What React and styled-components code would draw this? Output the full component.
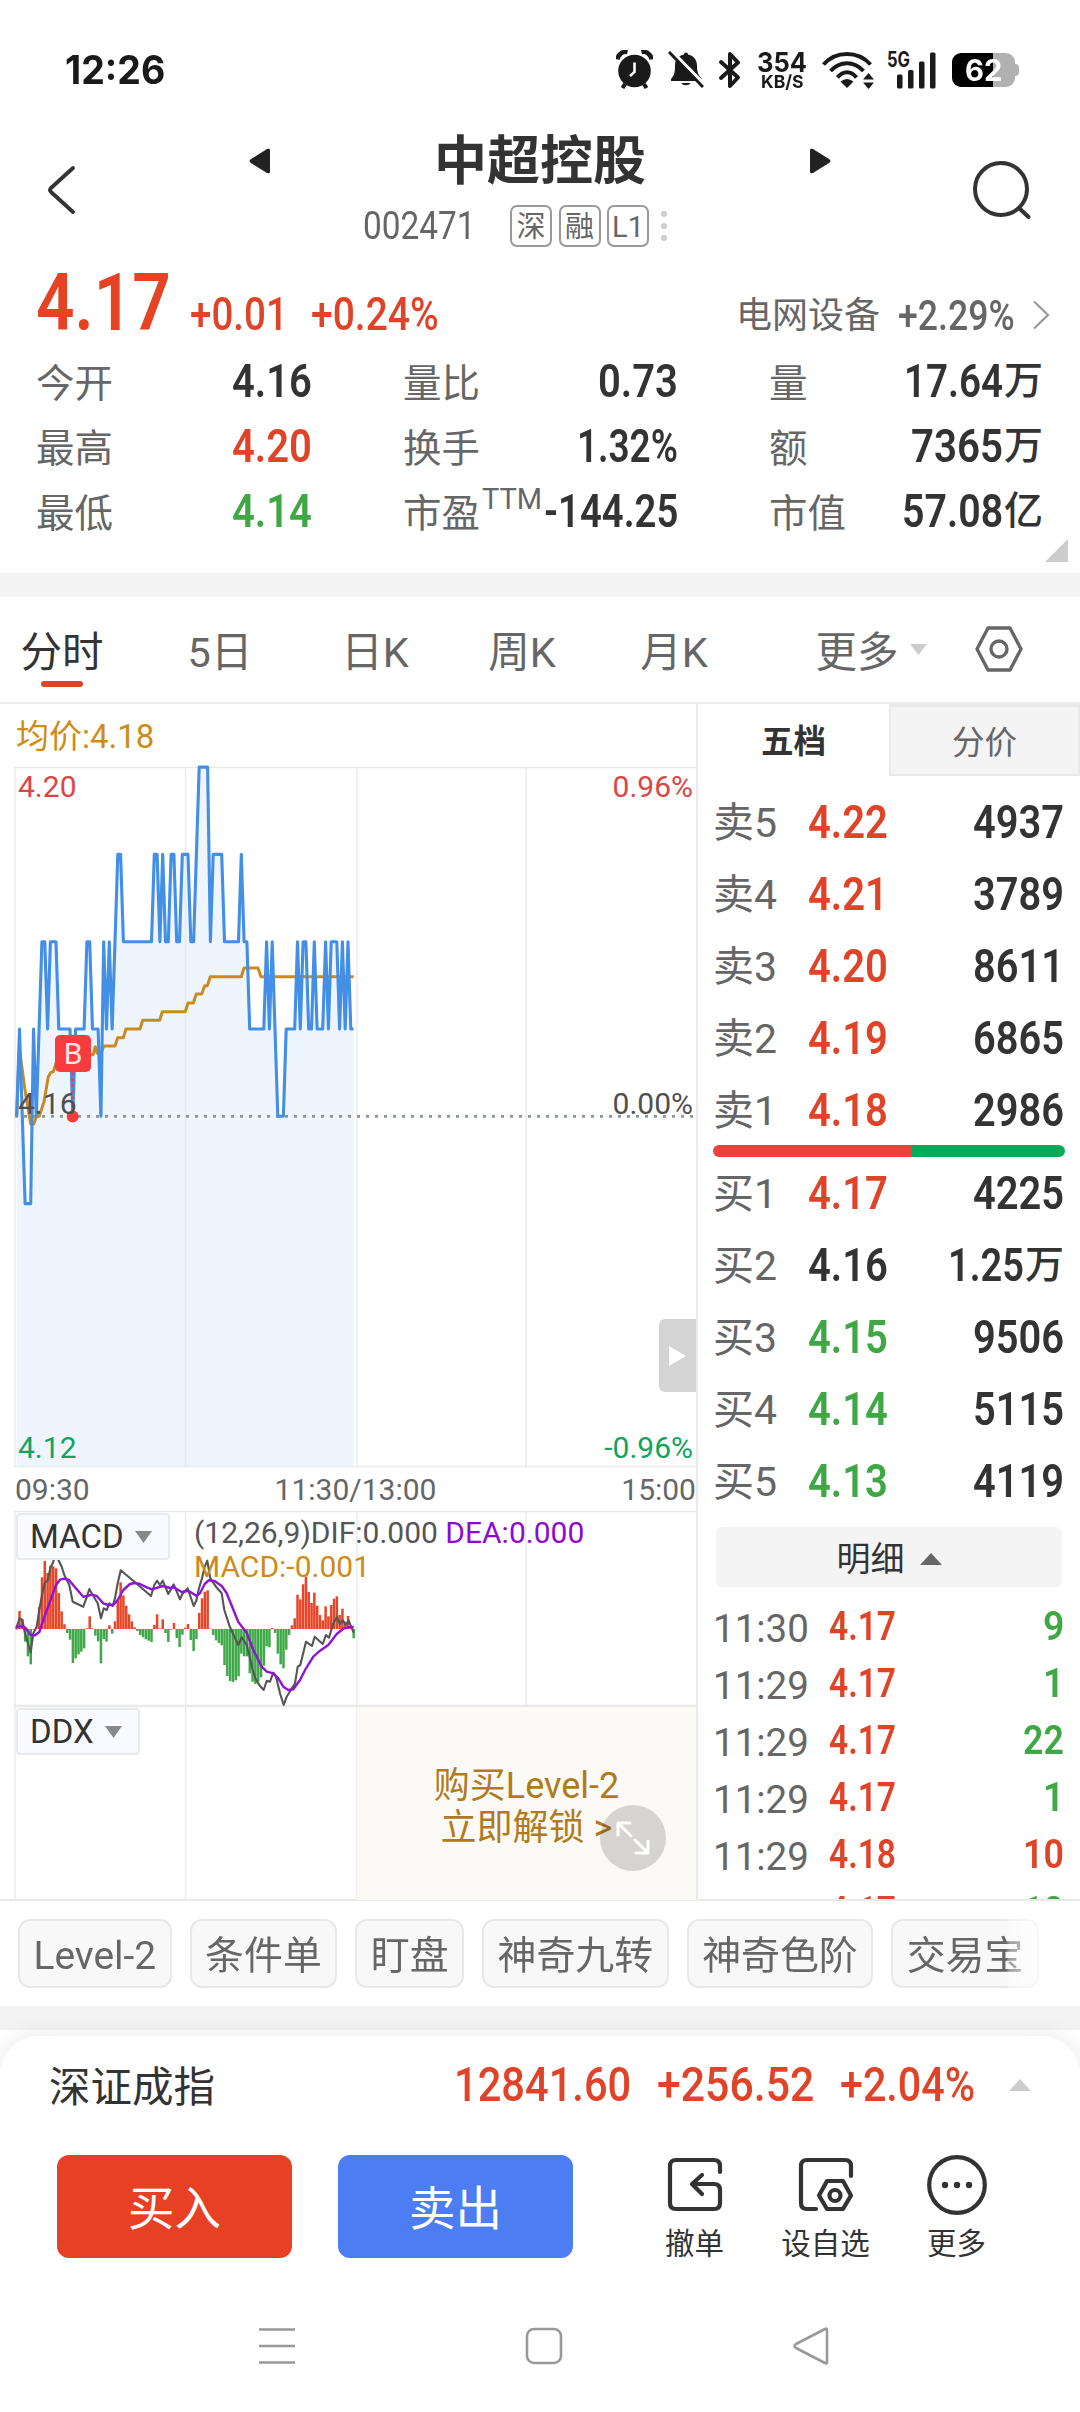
import React, { useLayoutEffect, useRef, useState } from "react";
import styled, { createGlobalStyle, css } from "styled-components";

const RED = "#e04428";
const GREEN = "#3fa845";
const INK = "#333333";
const GREY = "#666666";
const LINE = "#e9e9e9";
const GOLD = "#cf8b17";

const GlobalStyle = createGlobalStyle`
  * { box-sizing: border-box; }
  html, body { margin: 0; padding: 0; background: #fff; }
  body {
    width: 1080px;
    height: 2412px;
    overflow: hidden;
    font-family: Roboto, "Noto Sans CJK SC", sans-serif;
    color: ${INK};
  }
  svg { display: block; flex: none; }
`;

/* ---------- condensed figures ---------- */

const FitBox = styled.span`
  display: inline-block;
  flex: none;
  width: ${(p) => p.$w}px;
  white-space: nowrap;
  font-size: ${(p) => p.$size}px;
  font-weight: ${(p) => p.$weight};
  line-height: 1;
  color: ${(p) => p.$color};
`;

const FitInner = styled.span`
  display: inline-block;
  transform-origin: 0 50%;
`;

function Fit({ w, size = 46, weight = 600, color = INK, children }) {
  const ref = useRef(null);
  const [k, setK] = useState(1);
  useLayoutEffect(() => {
    setK(w / ref.current.offsetWidth);
  }, [w, children]);
  return (
    <FitBox $w={w} $size={size} $weight={weight} $color={color}>
      <FitInner ref={ref} style={{ transform: `scaleX(${k})` }}>{children}</FitInner>
    </FitBox>
  );
}

/* ---------- status bar ---------- */

const StatusBar = styled.div`
  display: flex;
  align-items: center;
  height: 112px;
  padding: 27px 62px 0 65px;
  justify-content: space-between;
  font-family: Inter, Roboto, sans-serif;
  color: #1a1a1a;
`;
const StatusIcons = styled.div`
  display: flex;
  align-items: center;
  height: 40px;
`;
const Gap = styled.i`
  flex: none;
  width: ${(p) => p.$w}px;
`;
const NetSpeed = styled.div`
  display: flex;
  flex-direction: column;
  align-items: center;
  width: 50px;
  gap: 0;
  > :first-child { margin-bottom: -3px; }
`;
const Battery = styled.div`
  position: relative;
  width: 63px;
  height: 34px;
  border-radius: 9px;
  background: linear-gradient(90deg, #000 41px, #b1b1b1 41px);
  display: flex;
  align-items: center;
  justify-content: center;
  &::after {
    content: "";
    position: absolute;
    right: -4px;
    top: 11px;
    width: 4px;
    height: 12px;
    border-radius: 0 4px 4px 0;
    background: #b1b1b1;
  }
`;

function Status() {
  return (
    <StatusBar>
      <Fit w={100} size={39} weight={650} color="#1a1a1a">12:26</Fit>
      <StatusIcons>
        <svg width="37" height="39" viewBox="0 0 37 39">
          <circle cx="18.5" cy="21" r="16.3" fill="#1a1a1a" />
          <path d="M1.500 9.500C2 4 7 1 11.500 2M35.500 9.500C35 4 30 1 25.500 2" stroke="#1a1a1a" strokeWidth="4.500" fill="none" />
          <path d="M9 34l-2.500 4M28 34l2.500 4" stroke="#1a1a1a" strokeWidth="4" />
          <path d="M18.500 12.500v9.500l-4.500 4" stroke="#fff" strokeWidth="2.600" fill="none" />
        </svg>
        <Gap $w={15} />
        <svg width="36" height="37" viewBox="0 0 36 37">
          <path d="M18 1.500c1.500 0 2 1 2 2 5 1 9 4.500 9 11 0 8 2 10 5 13.500v2H3v-2C6 24.500 7 22.500 7 14.500c0-6.500 4-10 9-11 0-1 .5-2 2-2z" fill="#1a1a1a" />
          <path d="M13.500 32h9c-1 3-8 3-9 0z" fill="#1a1a1a" />
          <path d="M3.500 0L37 34" stroke="#fff" strokeWidth="3.500" />
          <path d="M1 1l34 35" stroke="#1a1a1a" strokeWidth="3" />
        </svg>
        <Gap $w={14} />
        <svg width="25" height="38" viewBox="0 0 25 38">
          <path d="M3 11l17 15.500-8 8.500V3l8 8.500L3 27" stroke="#1a1a1a" strokeWidth="4" fill="none" strokeLinejoin="round" strokeLinecap="round" />
        </svg>
        <Gap $w={14} />
        <NetSpeed>
          <Fit w={50} size={27} weight={700} color="#1a1a1a">354</Fit>
          <Fit w={43} size={18} weight={700} color="#1a1a1a">KB/S</Fit>
        </NetSpeed>
        <Gap $w={15} />
        <svg width="52" height="38" viewBox="0 0 52 38">
          <g stroke="#1a1a1a" strokeWidth="4" fill="none">
            <path d="M1.500 13.500C14-.5 36-.5 48.500 13.500" />
            <path d="M8.500 20C18 9.500 32 9.500 41.500 20" />
            <path d="M15.500 26.500C21 19.500 29 19.500 34.500 26.500" />
          </g>
          <path d="M25 37l-6.500-6.500q6.500-5 13 0z" fill="#1a1a1a" />
          <path d="M41 28.500h11L46.500 22zM41 31.500h11L46.500 38z" fill="#1a1a1a" />
        </svg>
        <Gap $w={13} />
        <svg width="50" height="38" viewBox="0 0 50 38" overflow="visible">
          <text x="0" y="16" fontFamily="Inter, Roboto, sans-serif" fontSize="21" fontWeight="700" fill="#1a1a1a" textLength="23" lengthAdjust="spacingAndGlyphs">5G</text>
          <g fill="#1a1a1a">
            <rect x="10" y="23.500" width="5.500" height="14" rx="1.500" />
            <rect x="21" y="19" width="5.500" height="18.500" rx="1.500" />
            <rect x="32" y="10.500" width="5.500" height="27" rx="1.500" />
            <rect x="43" y="1.500" width="5.500" height="36" rx="1.500" />
          </g>
        </svg>
        <Gap $w={15} />
        <Battery>
          <Fit w={37} size={30} weight={700} color="#fff">62</Fit>
        </Battery>
        <Gap $w={3} />
      </StatusIcons>
    </StatusBar>
  );
}

/* ---------- title ---------- */

const Header = styled.header`
  display: grid;
  grid-template-columns: 249px 1fr 249px;
  height: 150px;
`;
const HeadSide = styled.div`
  display: flex;
  padding: ${(p) => p.$pad};
`;
const HeadCenter = styled.div`
  display: flex;
  flex-direction: column;
`;
const TitleRow = styled.div`
  display: flex;
  align-items: center;
  justify-content: space-between;
  height: 98px;
  h1 {
    margin: 0;
    padding-top: 2px;
    font-size: 53px;
    line-height: 60px;
    font-weight: 700;
  }
`;
const CodeRow = styled.div`
  display: flex;
  align-items: center;
  height: 42px;
  margin-top: -5px;
  padding-left: 114px;
`;
const Badge = styled.span`
  display: flex;
  align-items: center;
  justify-content: center;
  width: 42px;
  height: 42px;
  margin-right: 6.5px;
  border: 2px solid #999;
  border-radius: 7px;
  padding-top: 1px;
  font-size: 29px;
  line-height: 38px;
  color: ${GREY};
`;
const Dots = styled.span`
  display: grid;
  gap: 6px;
  margin-left: 5px;
  i { width: 6px; height: 6px; border-radius: 3px; background: #ccc; }
`;

/* ---------- quote ---------- */

const Quote = styled.section`
  height: 311px;
  padding: 0 12px 0 36px;
`;
const PriceRow = styled.div`
  display: flex;
  align-items: baseline;
  height: 86px;
  padding-top: 2px;
`;
const Spacer = styled.i`
  flex: 1;
`;
const Sector = styled.span`
  font-size: 36px;
  line-height: 1;
  color: ${GREY};
  margin-right: 18px;
  position: relative;
  top: -2px;
`;
const Stats = styled.div`
  display: grid;
  grid-template-columns: 276px 275px 274px;
  grid-auto-rows: 65px;
  column-gap: 91px;
`;
const Stat = styled.div`
  display: flex;
  align-items: center;
  justify-content: space-between;
`;
const StatLabel = styled.span`
  position: relative;
  top: 3px;
  font-size: 38.5px;
  line-height: 50px;
  color: ${GREY};
  white-space: nowrap;
`;
const Sup = styled.sup`
  position: absolute;
  left: 100%;
  top: -15px;
  margin-left: 2px;
  font-size: 29px;
  line-height: 50px;
`;
const StatValue = styled.span`
  display: flex;
  align-items: center;
  gap: 1px;
`;
const Unit = styled.span`
  font-size: ${(p) => p.$size || 39}px;
  line-height: 50px;
  font-weight: 500;
`;
const CornerRow = styled.div`
  display: flex;
  justify-content: flex-end;
  margin-top: -4px;
`;

const STATS = [
  ["今开", "4.16", 80, INK], ["量比", "0.73", 80, INK], ["量", "17.64", 99, INK, "万"],
  ["最高", "4.20", 80, RED], ["换手", "1.32%", 101, INK], ["额", "7365", 92, INK, "万"],
  ["最低", "4.14", 80, GREEN], ["市盈", "-144.25", 134, INK], ["市值", "57.08", 101, INK, "亿"],
];

const Band = styled.div`
  height: 24px;
  background: #f4f4f4;
`;

/* ---------- period tabs ---------- */

const Tabs = styled.nav`
  display: flex;
  height: 107px;
  padding-left: 21px;
  border-bottom: 2px solid ${LINE};
`;
const Tab = styled.span`
  display: flex;
  flex-direction: column;
  align-items: center;
  width: ${(p) => p.$w}px;
  margin-right: ${(p) => p.$gap}px;
  padding-top: 28px;
  font-size: 41.5px;
  line-height: 56px;
  white-space: nowrap;
  color: ${(p) => (p.$on ? INK : GREY)};
  ${(p) => p.$on && css`
    &::after {
      content: "";
      width: 42px;
      height: 6px;
      border-radius: 3px;
      background: ${RED};
    }
  `}
`;
const TabIcon = styled.span`
  padding-top: ${(p) => p.$top}px;
  margin-right: ${(p) => p.$gap || 0}px;
`;

/* ---------- body ---------- */

const Body = styled.main`
  display: grid;
  grid-template-columns: 696px 384px;
  height: 1197px;
  border-bottom: 2px solid ${LINE};
`;
const ChartCol = styled.div`
  display: flex;
  flex-direction: column;
  padding-left: 14px;
`;
const Average = styled.div`
  height: 64px;
  padding: 8px 0 0 2px;
  font-size: 33px;
  line-height: 50px;
  color: ${GOLD};
`;
const Panel = styled.div`
  position: relative;
  display: flex;
  flex-direction: column;
  height: ${(p) => p.$h}px;
  > svg { position: absolute; left: 0; top: 0; }
`;
const ScaleRow = styled.div`
  position: relative;
  display: flex;
  justify-content: space-between;
  padding: 0 3px 0 4px;
  margin-top: ${(p) => p.$top}px;
  font-size: 30px;
  line-height: 36px;
  color: ${(p) => p.$color};
`;
const AxisRow = styled.div`
  display: flex;
  justify-content: space-between;
  height: 44px;
  padding-left: 1px;
  font-size: 30px;
  line-height: 46px;
  color: #666;
`;
const BuyMark = styled.span`
  position: absolute;
  left: 41px;
  top: 267px;
  width: 36px;
  height: 37px;
  border-radius: 5px;
  background: #f73c40;
  color: #fde3e3;
  font-size: 30px;
  line-height: 38px;
  text-align: center;
`;
const Handle = styled.span`
  position: absolute;
  right: 0;
  top: 551px;
  width: 37px;
  height: 73px;
  border-radius: 6px 0 0 6px;
  background: #d4d4d4;
  display: flex;
  align-items: center;
  justify-content: center;
`;
const IndicatorRow = styled.div`
  position: relative;
  display: flex;
  padding: 2px 0 0 2px;
`;
const Picker = styled.span`
  display: flex;
  align-items: center;
  gap: 11px;
  width: ${(p) => p.$w}px;
  height: 47px;
  padding-left: 12px;
  border: 2px solid #e8e9ec;
  border-radius: 4px;
  background: #f9faff;
  font-size: 33px;
  line-height: 44px;
  color: ${INK};
`;
const Legend = styled.div`
  padding-left: 24px;
  font-size: 30px;
  line-height: 34px;
  color: #555;
  white-space: nowrap;
  padding-top: 3px;
  b { font-weight: 400; color: #8f0ad1; }
  em { display: block; font-style: normal; color: ${GOLD}; }
`;
const Unlock = styled.div`
  position: absolute;
  left: 343px;
  top: 1px;
  width: 339px;
  height: 193px;
  padding-top: 58px;
  background: #fbfaf6;
  color: #b17b1d;
  font-size: 36px;
  line-height: 42px;
  text-align: center;
`;
const FullScreen = styled.span`
  position: absolute;
  left: 243px;
  top: 98px;
  width: 66px;
  height: 66px;
  border-radius: 33px;
  background: rgba(0, 0, 0, 0.15);
  display: flex;
  align-items: center;
  justify-content: center;
`;

const X = (i) => 16.67 + 2.808 * i;
const Y = (p) => 1116.3 - (p - 16) * 87.3;

/* last digits of the price for every minute of the morning, as [price, minutes] */
const RUNS = [
  [16, 1], [17, 1], [16, 1], [15, 3], [17, 1], [16, 1], [17, 1], [18, 2], [17, 1], [18, 3], [17, 5], [16, 1],
  [17, 4], [18, 2], [17, 3], [16, 1], [18, 1], [17, 1], [18, 1], [17, 1], [18, 1], [19, 2], [18, 11], [19, 2],
  [18, 1], [19, 1], [18, 2], [19, 2], [18, 2], [19, 3], [18, 2], [19, 1], [20, 4], [18, 1], [19, 4], [18, 6],
  [19, 1], [18, 2], [17, 6], [18, 1], [17, 1], [18, 1], [17, 1], [16, 3], [17, 4], [18, 1], [17, 1], [18, 2],
  [17, 2], [18, 1], [17, 3], [18, 1], [17, 1], [18, 3], [17, 1], [18, 1], [17, 1], [18, 1], [17, 2],
];
const PRICES = RUNS.flatMap(([p, n]) => Array(n).fill(p));
const PRICE_LINE = PRICES.map((p, i) => `${X(i).toFixed(1)},${Y(p).toFixed(1)}`).join(" ");

const scaled = (s, oy) =>
  s.trim().split(/\s+/).map((q) => {
    const [x, y] = q.split(",").map(Number);
    return `${(x / 3).toFixed(1)},${(oy + y / 3).toFixed(1)}`;
  }).join(" ");

const AVG_LINE = scaled(
  "50,1129 58,925 75,1050 92,1152 101,1152 109,1130 118,1128 132,1085 145,1010 152,998 160,995 168,970 200,960 272,945 280,943 286,920 292,940 303,940 311,918 345,918 353,893 370,893 378,867 420,867 428,841 479,841 487,815 556,815 564,789 580,789 589,762 605,762 614,737 622,737 631,710 724,710 732,684 774,684 783,710 1061,710",
  740
);

const BARS = [
  0, 54, 30, -38, -82, -106, -2, 5, 66, 155, 204, 168, 190, 188, 182, 108, 53, 14, -12, -32, -102, -88, -76, -68, -58,
  2, 38, 2, -20, -37, -103, -30, -38, 11, -14, 23, 85, 140, 101, 70, 44, 23, 5, -6, -18, -25, -31, -35, -39, 12, 44, 2,
  29, -12, -39, -2, 18, -27, -54, -17, 4, 15, -33, -66, -30, 48, 92, 112, 116, 1, -18, -34, -42, -49, -108, -141, -156,
  -159, -154, -142, -74, -82, -82, -133, -158, -165, -158, -145, -110, -52, -55, 3, -12, -74, -106, -118, -62, -18, 11,
  32, 103, 89, 134, 157, 111, 78, 109, 70, 42, 26, 68, 38, 72, 91, 98, 42, 61, 22, 39, 10, -28,
];

const DIF_LINE = scaled(
  "48,356 59,325 67,330 75,370 92,428 100,370 110,350 118,300 126,255 134,218 143,212 151,175 160,155 165,140 171,142 185,170 193,195 208,225 218,275 250,290 260,262 268,237 275,250 293,280 303,325 311,295 320,300 328,280 338,288 345,265 353,220 362,181 404,216 453,258 463,225 471,212 480,225 488,212 505,252 521,223 540,268 547,252 563,235 581,288 589,272 597,235 606,205 614,170 622,152 631,205 648,230 665,250 673,300 690,352 715,405 725,382 740,405 749,440 758,480 766,505 780,528 791,540 800,512 810,515 820,488 828,500 840,550 851,585 860,560 885,520 893,470 901,465 918,395 936,408 944,380 968,402 978,375 987,383 1000,340 1011,322 1020,342 1028,330 1037,345 1046,332 1061,368",
  1510
);
const DEA_LINE = scaled(
  "48,354 60,348 75,352 92,375 105,376 118,366 134,318 151,272 168,225 180,209 193,206 207,210 225,232 250,260 262,258 275,254 290,258 310,280 325,285 340,285 353,270 370,240 390,222 404,219 420,222 440,232 456,238 488,228 510,234 521,232 545,246 565,242 589,257 600,250 614,222 626,211 645,214 665,228 680,250 715,336 740,368 760,420 785,470 800,485 820,490 835,505 850,530 865,540 880,538 900,510 918,475 940,440 960,422 985,405 1010,372 1030,356 1050,351 1061,352",
  1510
);

function Frame({ top, height }) {
  return (
    <g stroke={LINE} strokeWidth="1.3">
      <path d={`M14 ${top + 0.5}H697M14 ${top + height - 0.5}H697`} />
      <path d={`M15 ${top}v${height}M185.500 ${top}v${height}M357 ${top}v${height}M526 ${top}v${height}`} />
    </g>
  );
}

function PriceChart() {
  return (
    <svg width="683" height="699" viewBox="14 768 683 699" overflow="visible">
      <polygon points={`${X(0)},1466 ${PRICE_LINE} ${X(120)},1466`} fill="#eef5fe" />
      <Frame top={767} height={700} />
      <path d="M15 1116.300H697" stroke="#8f959c" strokeWidth="2.800" strokeDasharray="3 6" />
      <polyline points={AVG_LINE} fill="none" stroke="#c98a1e" strokeWidth="3" strokeLinejoin="round" />
      <polyline points={PRICE_LINE} fill="none" stroke="#438fe6" strokeWidth="3.100" strokeLinejoin="round" />
      <path d="M72.700 1072V1112" stroke="#f73c40" strokeWidth="2.600" strokeDasharray="3 3" />
      <circle cx="72.700" cy="1116.500" r="6" fill="#f73c40" />
    </svg>
  );
}

function MacdChart() {
  return (
    <svg width="683" height="195" viewBox="14 1511 683 195" overflow="visible">
      <Frame top={1511} height={195} />
      {BARS.map((v, i) => (
        <rect
          key={i}
          x={X(i) - 1.2}
          y={v > 0 ? 1629 - v / 3 : 1629}
          width="2.500"
          height={Math.max(Math.abs(v) / 3, 0.5)}
          fill={v > 0 ? "#e84427" : "#3ea947"}
        />
      ))}
      <polyline points={DIF_LINE} fill="none" stroke="#555" strokeWidth="2.100" strokeLinejoin="round" />
      <polyline points={DEA_LINE} fill="none" stroke="#8f14d6" strokeWidth="2.400" strokeLinejoin="round" />
    </svg>
  );
}

/* ---------- order book ---------- */

const Book = styled.aside`
  display: flex;
  flex-direction: column;
  height: 1195px;
  overflow: hidden;
  border-left: 2px solid ${LINE};
`;
const BookTabs = styled.div`
  display: grid;
  flex: none;
  grid-template-columns: 191px 191px;
  height: 72px;
  margin-bottom: 10px;
`;
const BookTab = styled.span`
  display: flex;
  align-items: center;
  justify-content: center;
  padding-top: 4px;
  font-size: 32.5px;
  line-height: 40px;
  font-weight: ${(p) => (p.$on ? 700 : 400)};
  color: ${(p) => (p.$on ? INK : GREY)};
  ${(p) => !p.$on && css`
    background: #f4f4f4;
    border: 2px solid ${LINE};
    border-top-width: 3px;
  `}
`;
const Level = styled.div`
  display: grid;
  flex: none;
  grid-template-columns: 95px 1fr auto;
  align-items: center;
  height: 72px;
  padding: 0 16px 0 15px;
`;
const LevelName = styled.span`
  position: relative;
  top: 1px;
  font-size: 41px;
  line-height: 50px;
  color: ${GREY};
`;
const Ratio = styled.div`
  flex: none;
  height: 12px;
  margin: -1px 15px 0 15px;
  border-radius: 6px;
  background: linear-gradient(90deg, #f43d3f 199px, #09a85a 199px);
`;
const DetailButton = styled.div`
  display: flex;
  flex: none;
  align-items: center;
  justify-content: center;
  gap: 15px;
  height: 60px;
  margin: 10px 18px 11px 18px;
  border-radius: 6px;
  background: #f4f4f4;
  padding-top: 4px;
  font-size: 34px;
  line-height: 50px;
  color: ${INK};
`;
const Trade = styled.div`
  display: grid;
  flex: none;
  grid-template-columns: 116px 1fr auto;
  align-items: center;
  height: 57px;
  padding: 0 16px 0 15px;
`;
const TradeTime = styled.span`
  position: relative;
  top: 2px;
  font-size: 38.5px;
  line-height: 50px;
  color: ${GREY};
`;

const SELLS = [["卖5", "4.22", "4937"], ["卖4", "4.21", "3789"], ["卖3", "4.20", "8611"], ["卖2", "4.19", "6865"], ["卖1", "4.18", "2986"]];
const BUYS = [["买1", "4.17", "4225", RED], ["买2", "4.16", "1.25", INK, "万"], ["买3", "4.15", "9506", GREEN], ["买4", "4.14", "5115", GREEN], ["买5", "4.13", "4119", GREEN]];
const TRADES = [
  ["11:30", "4.17", "9", 21, GREEN], ["11:29", "4.17", "1", 21, GREEN], ["11:29", "4.17", "22", 41, GREEN],
  ["11:29", "4.17", "1", 21, GREEN], ["11:29", "4.18", "10", 41, RED], ["11:29", "4.17", "12", 41, GREEN],
];

function BookRow({ name, price, qty, color, unit }) {
  return (
    <Level>
      <LevelName>{name}</LevelName>
      <Fit w={80} color={color}>{price}</Fit>
      <StatValue>
        <Fit w={unit ? 76 : 91}>{qty}</Fit>
        {unit && <Unit>{unit}</Unit>}
      </StatValue>
    </Level>
  );
}

/* ---------- shortcuts ---------- */

const Pills = styled.div`
  display: flex;
  gap: 18px;
  width: 1062px;
  height: 105px;
  padding: 18px 0 0 18px;
  overflow: hidden;
  mask-image: linear-gradient(90deg, #000 1006px, rgba(0, 0, 0, 0.65) 1009px, transparent 1062px);
`;
const Pill = styled.span`
  flex: none;
  height: 69px;
  padding: 1px 13.5px 0;
  border: 2px solid #e8e8e8;
  border-radius: 12px;
  background: #f8f8f8;
  font-size: 38.9px;
  line-height: 67px;
  color: ${GREY};
  white-space: nowrap;
`;
const LowBand = styled.div`
  height: 24px;
  background: #f3f3f3;
`;

/* ---------- bottom sheet ---------- */

const Sheet = styled.footer`
  position: relative;
  height: 376px;
  margin-top: 6px;
  border-radius: 38px 38px 0 0;
  background: #fff;
  box-shadow: 0 0 26px rgba(0, 0, 0, 0.09);
`;
const IndexRow = styled.div`
  display: flex;
  align-items: center;
  height: 97px;
  padding: 0 49px 0 49px;
`;
const IndexName = styled.span`
  flex: 1;
  position: relative;
  top: 3px;
  font-size: 41.5px;
  line-height: 56px;
`;
const Actions = styled.div`
  display: flex;
  height: 125px;
  padding: 22px 0 0 57px;
`;
const TradeButton = styled.button`
  width: 235px;
  height: 103px;
  margin: 0 46px 0 0;
  padding: 5px 0 0;
  border: 0;
  border-radius: 12px;
  background: ${(p) => p.$bg};
  color: #fff;
  font: 400 46.5px/98px Roboto, "Noto Sans CJK SC", sans-serif;
`;
const Tool = styled.span`
  display: flex;
  flex-direction: column;
  align-items: center;
  width: 131px;
  margin-left: ${(p) => p.$ml || 0}px;
  font-size: 29.5px;
  line-height: 36px;
  svg { margin: -1px 0 10px; }
`;
const NavBar = styled.div`
  display: flex;
  height: 150px;
  padding: 68px 249px 0 257px;
  justify-content: space-between;
`;

const Caret = ({ w, h, color, up }) => (
  <svg width={w} height={h} viewBox="0 0 10 10" preserveAspectRatio="none">
    <path d={up ? "M0 10h10L5 0z" : "M0 0h10L5 10z"} fill={color} />
  </svg>
);

export default function App() {
  return (
    <>
      <GlobalStyle />
      <Status />
      <Header>
        <HeadSide $pad="54px 0 0 47px">
          <svg width="29" height="48" viewBox="0 0 29 48"><path d="M26 2L4 22q-2 2 0 4l22 20" fill="none" stroke="#333" strokeWidth="3.800" strokeLinecap="round" /></svg>
        </HeadSide>
        <HeadCenter>
          <TitleRow>
            <svg width="21" height="26" viewBox="0 0 21 26"><path d="M21 2v22q0 2-3 1L2 15q-3-2 0-4L18 1q3-1 3 1z" fill="#222" /></svg>
            <h1>中超控股</h1>
            <svg width="21" height="26" viewBox="0 0 21 26"><path d="M0 2v22q0 2 3 1l16-10q3-2 0-4L3 1Q0 0 0 2z" fill="#222" /></svg>
          </TitleRow>
          <CodeRow>
            <Fit w={113} size={39} weight={400} color={GREY}>002471</Fit>
            <Gap $w={34} />
            <Badge>深</Badge>
            <Badge>融</Badge>
            <Badge>L1</Badge>
            <Dots><i /><i /><i /></Dots>
          </CodeRow>
        </HeadCenter>
        <HeadSide $pad="47px 0 0 140px">
          <svg width="62" height="62" viewBox="0 0 62 62" fill="none" stroke="#333" strokeWidth="4"><circle cx="30" cy="30" r="26" /><path d="M48 49l9.500 9" strokeLinecap="round" /></svg>
        </HeadSide>
      </Header>
      <Quote>
        <PriceRow>
          <Fit w={135} size={79} weight={600} color="#e64325">4.17</Fit>
          <Gap $w={19} />
          <Fit w={98} size={46} weight={500} color={RED}>+0.01</Fit>
          <Gap $w={23} />
          <Fit w={128} size={46} weight={500} color={RED}>+0.24%</Fit>
          <Spacer />
          <Sector>电网设备</Sector>
          <Fit w={117} size={42} weight={500} color={GREY}>+2.29%</Fit>
          <Gap $w={18} />
          <svg width="17" height="30" viewBox="0 0 17 30"><path d="M1 1.500L15 15 1 28.500" fill="none" stroke="#999" strokeWidth="2.200" /></svg>
          <Gap $w={18} />
        </PriceRow>
        <Stats>
          {STATS.map(([label, value, w, color, unit]) => (
            <Stat key={label}>
              <StatLabel>{label}{label === "市盈" && <Sup>TTM</Sup>}</StatLabel>
              <StatValue>
                <Fit w={w} color={color}>{value}</Fit>
                {unit && <Unit>{unit}</Unit>}
              </StatValue>
            </Stat>
          ))}
        </Stats>
        <CornerRow><svg width="23" height="23" viewBox="0 0 23 23"><path d="M23 0v23H0z" fill="#ccc" /></svg></CornerRow>
      </Quote>
      <Band />
      <Tabs>
        <Tab $w={82} $gap={86} $on>分时</Tab>
        <Tab $w={62} $gap={91}>5日</Tab>
        <Tab $w={66} $gap={81}>日K</Tab>
        <Tab $w={66} $gap={86}>周K</Tab>
        <Tab $w={66} $gap={109}>月K</Tab>
        <Tab $w={82} $gap={12}>更多</Tab>
        <TabIcon $top={47} $gap={48}><Caret w={17} h={11} color="#ccc" /></TabIcon>
        <TabIcon $top={29}>
          <svg width="48" height="46" viewBox="0 0 48 46" fill="none" stroke="#666" strokeWidth="3.400" strokeLinejoin="round"><path d="M13 2h22l11 21-11 21H13L2 23z" /><circle cx="24" cy="23" r="8" /></svg>
        </TabIcon>
      </Tabs>
      <Body>
        <ChartCol>
          <Average>均价:4.18</Average>
          <Panel $h={699}>
            <PriceChart />
            <ScaleRow $top={1} $color="#dd4444"><span>4.20</span><span>0.96%</span></ScaleRow>
            <ScaleRow $top={281} $color="#4f4f4f"><span>4.16</span><span>0.00%</span></ScaleRow>
            <ScaleRow $top={308} $color="#12a35c"><span>4.12</span><span>-0.96%</span></ScaleRow>
            <BuyMark>B</BuyMark>
            <Handle><svg width="17" height="20" viewBox="0 0 17 20"><path d="M0 0l17 10L0 20z" fill="#fff" /></svg></Handle>
          </Panel>
          <AxisRow><span>09:30</span><span>11:30/13:00</span><span>15:00</span></AxisRow>
          <Panel $h={195}>
            <MacdChart />
            <IndicatorRow>
              <Picker $w={154}>MACD<Caret w={17} h={12} color="#888" /></Picker>
              <Legend>(12,26,9)DIF:0.000 <b>DEA:0.000</b><em>MACD:-0.001</em></Legend>
            </IndicatorRow>
          </Panel>
          <Panel $h={194}>
            <svg width="683" height="194" viewBox="14 1706 683 194"><Frame top={1706} height={194} /></svg>
            <IndicatorRow><Picker $w={124}>DDX<Caret w={17} h={12} color="#888" /></Picker></IndicatorRow>
            <Unlock>
              购买Level-2<br />立即解锁 &gt;
              <FullScreen>
                <svg width="34" height="34" viewBox="0 0 34 34" fill="none" stroke="#fff" strokeWidth="3" strokeLinecap="round" strokeLinejoin="round"><path d="M2 14V2h12M2 2l13 13M20 32h12V20M32 32L19 19" /></svg>
              </FullScreen>
            </Unlock>
          </Panel>
        </ChartCol>
        <Book>
          <BookTabs><BookTab $on>五档</BookTab><BookTab>分价</BookTab></BookTabs>
          {SELLS.map(([n, p, q]) => <BookRow key={n} name={n} price={p} qty={q} color={RED} />)}
          <Ratio />
          {BUYS.map(([n, p, q, c, u]) => <BookRow key={n} name={n} price={p} qty={q} color={c} unit={u} />)}
          <DetailButton>明细<Caret w={22} h={12} color="#666" up /></DetailButton>
          {TRADES.map(([t, p, q, w, c], i) => (
            <Trade key={i}>
              <TradeTime>{t}</TradeTime>
              <Fit w={67} size={40} color={RED}>{p}</Fit>
              <Fit w={w} size={41} color={c}>{q}</Fit>
            </Trade>
          ))}
        </Book>
      </Body>
      <Pills>
        <Pill>Level-2</Pill>
        <Pill>条件单</Pill>
        <Pill>盯盘</Pill>
        <Pill>神奇九转</Pill>
        <Pill>神奇色阶</Pill>
        <Pill>交易宝</Pill>
        <Pill />
      </Pills>
      <LowBand />
      <Sheet>
        <IndexRow>
          <IndexName>深证成指</IndexName>
          <Fit w={177} size={48} weight={500} color={RED}>12841.60</Fit>
          <Gap $w={26} />
          <Fit w={157} size={48} weight={500} color={RED}>+256.52</Fit>
          <Gap $w={26} />
          <Fit w={135} size={48} weight={500} color={RED}>+2.04%</Fit>
          <Gap $w={34} />
          <Caret w={22} h={12} color="#ccc" up />
        </IndexRow>
        <Actions>
          <TradeButton $bg="#e84024">买入</TradeButton>
          <TradeButton $bg="#4c7df2">卖出</TradeButton>
          <Tool $ml={10}>
            <svg width="60" height="62" viewBox="0 0 60 62" fill="none" stroke="#333" strokeWidth="4.200" strokeLinecap="round" strokeLinejoin="round"><path d="M55 18v-6q0-6-6-6H11q-6 0-6 6v37q0 6 6 6h38q6 0 6-6V36q0-6-6-6H28M37 21l-10 9 10 10" /></svg>
            撤单
          </Tool>
          <Tool>
            <svg width="60" height="62" viewBox="0 0 60 62" fill="none" stroke="#333" strokeWidth="4.200" strokeLinecap="round" strokeLinejoin="round"><path d="M55 22V12q0-6-6-6H11q-6 0-6 6v37q0 6 6 6h9" /><path d="M31 27h16l8 14.500L47 55H31l-8-13.500z" /><circle cx="39" cy="41.500" r="5.500" /></svg>
            设自选
          </Tool>
          <Tool>
            <svg width="60" height="62" viewBox="0 0 60 62"><circle cx="30" cy="31" r="27.800" fill="none" stroke="#333" strokeWidth="4.200" /><g fill="#333"><circle cx="18" cy="31" r="3.200" /><circle cx="30" cy="31" r="3.200" /><circle cx="42" cy="31" r="3.200" /></g></svg>
            更多
          </Tool>
        </Actions>
        <NavBar>
          <svg width="40" height="40" viewBox="0 0 40 40" stroke="#999" strokeWidth="2.600"><path d="M2 3.500h36M2 20h36M2 36.500h36" /></svg>
          <svg width="40" height="40" viewBox="0 0 40 40" fill="none" stroke="#999" strokeWidth="2.600"><rect x="3" y="3" width="34" height="34" rx="7" /></svg>
          <svg width="40" height="40" viewBox="0 0 40 40" fill="none" stroke="#999" strokeWidth="2.600" strokeLinejoin="round"><path d="M36 4v32q0 2-2 1L5 22q-3-2 0-4L34 3q2-1 2 1z" /></svg>
        </NavBar>
      </Sheet>
    </>
  );
}
